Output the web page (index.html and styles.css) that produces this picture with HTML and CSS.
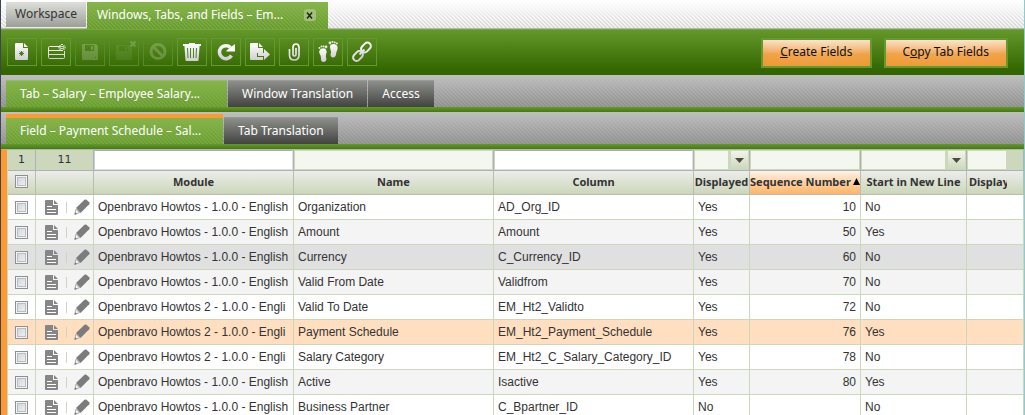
FILE: index.html
```html
<!DOCTYPE html>
<html lang="en">
<head>
<meta charset="utf-8">
<title>Windows, Tabs, and Fields</title>
<link rel="stylesheet" href="styles.css">
</head>
<body>
<svg class="defs" width="0" height="0" aria-hidden="true">
  <defs>
    <linearGradient id="silver" x1="0" y1="0" x2="0" y2="1"><stop offset="0" stop-color="#fff"/><stop offset="1" stop-color="#cfcfcf"/></linearGradient>
    <linearGradient id="silver-line" gradientUnits="userSpaceOnUse" x1="0" y1="4" x2="0" y2="24"><stop offset="0" stop-color="#fff"/><stop offset="1" stop-color="#c4c4c4"/></linearGradient>
    <symbol id="doc" viewBox="0 0 13 15"><path fill="#868686" d="M1 0h7v5h5v9a1 1 0 0 1-1 1H1a1 1 0 0 1-1-1V1a1 1 0 0 1 1-1zM9 0l4 4H9z"/><path stroke="#fff" d="M2 6.500h5M2 9.500h9M2 12.500h9"/></symbol>
    <symbol id="pencil" viewBox="0 0 16 16"><path fill="#7c7c7c" d="M2 9 10.500.800q1-.800 2 0L15.200 3.300q.800 1 0 2L6.500 14z"/><path fill="#f6f6f6" stroke="#8a8a8a" stroke-width=".7" d="M2 10.200 5.500 13.700.800 15.300z"/><path fill="#777" d="M1.300 13.200.300 15.800 3 14.900z"/></symbol>
  </defs>
</svg>
<div class="app">
  <nav class="main-tabs" aria-label="Open windows">
    <button class="main-tab">Workspace</button>
    <div class="main-tab main-tab-active"><span>Windows, Tabs, and Fields – Em...</span>
      <button class="close" aria-label="Close tab"><svg width="7" height="7" viewBox="0 0 7 7"><path d="M1 .500 6 6.500M6 .500 1 6.500" stroke="#222" stroke-width="1.500"/></svg></button>
    </div>
  </nav>

  <div class="toolbar">
    <div class="tools">
      <button class="tool" aria-label="New in form"><svg viewBox="0 0 28 26"><path fill="url(#silver)" fill-rule="evenodd" d="M8 4h7v5h5v11a1 1 0 0 1-1 1H8a1 1 0 0 1-1-1V5a1 1 0 0 1 1-1zM16 4l4 4h-4z"/><path d="M13.500 12v5M11 14.500h5M11.800 12.700l3.400 3.600M15.200 12.700l-3.400 3.600" stroke="#47801a"/></svg></button>
      <button class="tool" aria-label="New in grid"><svg viewBox="0 0 28 26"><path fill="none" stroke="url(#silver-line)" d="M18 7.500H7.500q-1 0-1 1v10q0 1 1 1h14q1 0 1-1V12M7 11.500h12M7 15.500h15"/><path stroke="#fff" stroke-width="2" stroke-dasharray="1 1" d="M16.500 8.500h7M20 5v7"/><path d="M17.500 6l5 5M22.500 6l-5 5" stroke="#fff"/><circle cx="20" cy="8.500" r="1" fill="#4d8720"/></svg></button>
      <button class="tool tool-off" disabled aria-label="Save"><svg viewBox="0 0 28 26"><path fill="#fff" fill-rule="evenodd" d="M6 6q0-1 1-1h13l2 2v13q0 1-1 1H7q-1 0-1-1zM9 6v6h9V6zM15 7h2v4h-2zM19 18h1v1h-1z"/></svg></button>
      <button class="tool tool-off" disabled aria-label="Save and close"><svg viewBox="0 0 28 26"><path fill="#fff" fill-opacity=".35" fill-rule="evenodd" d="M6 7q0-1 1-1h12l3 3v11q0 1-1 1H7q-1 0-1-1zM9 7v5h9V7zM15 8h2v3h-2z"/><path stroke="#fff" stroke-width="2" d="M20.500 2.500l5 5M25.500 2.500l-5 5"/></svg></button>
      <button class="tool tool-off" disabled aria-label="Undo"><svg viewBox="0 0 28 26"><circle cx="14" cy="12.500" r="7" fill="none" stroke="#fff" stroke-width="3"/><path d="M9.500 8l9 9" stroke="#fff" stroke-width="3"/></svg></button>
      <button class="tool" aria-label="Delete"><svg viewBox="0 0 28 26"><path fill="url(#silver)" d="M5 5h6V4h6v1h6v2h-1.500v1l-1 13q0 1-1 1h-11q-1 0-1-1L6.500 8V7H5z"/><path d="M9.500 9l.500 10M12.500 9v10M15.500 9v10M18.500 9l-.500 10" stroke="#4a831d"/></svg></button>
      <button class="tool" aria-label="Refresh"><svg viewBox="0 0 28 26"><path fill="none" stroke="url(#silver-line)" stroke-width="3.500" d="M19.500 16.500A6.500 6.500 0 1 1 18.500 8.500"/><path fill="#fff" d="M23 5v7.500h-8.500v-1z"/></svg></button>
      <button class="tool" aria-label="Export"><svg viewBox="0 0 28 26"><path fill="url(#silver)" d="M5 4h7v5h5v5h-6v4h6v3H5q-1 0-1-1V5q0-1 1-1zM13 4l4 4h-4zM12 14h6v-4l6 5.500-6 5.500v-4h-6z"/></svg></button>
      <button class="tool" aria-label="Attachments"><svg viewBox="0 0 28 26"><path fill="none" stroke="url(#silver-line)" stroke-width="1.700" d="M9.500 10v6q0 5 4.700 5t4.800-5V8.500Q19 5 16 5t-3 3.500v7q0 1.500 1.500 1.500t1.500-1.500V9"/></svg></button>
      <button class="tool" aria-label="Audit trail"><svg viewBox="0 0 28 26"><g fill="url(#silver)"><path d="M6 10.500q3.500-2.500 6 0 1.500 2.500 0 5-.500 2 .500 4.500-.500 3-3 3-2.500 0-2.500-3 .300-3-1.200-5-1.300-2.500.200-4.500z"/><path d="M16.500 6q3-2 6 0 2 2.500.500 5.500-.700 1.500-1 4-.500 3-3 3-2.700-.500-2.400-3 1-2.500 0-4.500Q15 8 16.500 6z"/><circle cx="5.500" cy="9" r="1"/><circle cx="7.500" cy="7.500" r="1"/><circle cx="9.500" cy="7.500" r="1"/><circle cx="12" cy="8" r="1.400"/><circle cx="16" cy="4" r="1.400"/><circle cx="18.500" cy="3" r="1"/><circle cx="20.700" cy="3.400" r="1"/><circle cx="22.800" cy="4.600" r="1"/></g></svg></button>
      <button class="tool" aria-label="Link"><svg viewBox="0 0 28 26"><g fill="none" stroke="url(#silver-line)" stroke-width="2"><rect x="12.500" y="5" width="11" height="7" rx="3.500" transform="rotate(-45 18 8.500)"/><rect x="4.500" y="13.500" width="11" height="7" rx="3.500" transform="rotate(-45 10 17)"/><path d="M11.500 15.500l5-5"/></g></svg></button>
    </div>
    <div class="actions">
      <button class="action"><u>C</u>reate Fields</button>
      <button class="action">C<u>o</u>py Tab Fields</button>
    </div>
  </div>

  <nav class="sub-tabs" aria-label="Tab level">
    <button class="sub-tab sub-tab-on wide">Tab – Salary – Employee Salary...</button>
    <button class="sub-tab">Window Translation</button>
    <button class="sub-tab">Access</button>
  </nav>
  <nav class="sub-tabs" aria-label="Field level">
    <button class="sub-tab sub-tab-on focused">Field – Payment Schedule – Sal...</button>
    <button class="sub-tab">Tab Translation</button>
  </nav>

  <main class="grid-pane">
    <table class="grid">
      <colgroup><col class="c-check"><col class="c-edit"><col class="c-text"><col class="c-text"><col class="c-text"><col class="c-shown"><col class="c-seq"><col class="c-line"><col></colgroup>
      <thead>
        <tr class="filters">
          <td class="count">1</td><td class="count">11</td>
          <td><input class="filter plain" type="text" aria-label="Filter module"></td>
          <td><input class="filter" type="text" aria-label="Filter name"></td>
          <td><input class="filter plain" type="text" aria-label="Filter column"></td>
          <td><div class="combo"><input class="filter" type="text" aria-label="Filter displayed"><button class="drop" aria-label="Choose displayed"><svg width="9" height="5" viewBox="0 0 9 5"><path d="M0 0h9L4.500 5z" fill="#4b4b42"/></svg></button></div></td>
          <td><input class="filter" type="text" aria-label="Filter sequence number"></td>
          <td><div class="combo"><input class="filter" type="text" aria-label="Filter start in new line"><button class="drop" aria-label="Choose start in new line"><svg width="9" height="5" viewBox="0 0 9 5"><path d="M0 0h9L4.500 5z" fill="#4b4b42"/></svg></button></div></td>
          <td><div class="last"><input class="filter" type="text" aria-label="Filter display"></div></td>
        </tr>
        <tr class="heads">
          <th><input type="checkbox" aria-label="Select all"></th><th></th>
          <th>Module</th><th>Name</th><th>Column</th><th class="tight">Displayed</th>
          <th class="sorted tight"><div class="sort">Sequence Number<svg width="7" height="7" viewBox="0 0 7 7"><path d="M0 7 3.500 0 7 7z"/></svg></div></th>
          <th>Start in New Line</th><th class="cut"><div class="last">Display</div></th>
        </tr>
      </thead>
      <tbody id="rows"></tbody>
    </table>
  </main>
</div>
<script src="rows.js"></script>
</body>
</html>
```
FILE: styles.css
```css
* { box-sizing: border-box; }
body { margin: 0; height: 100vh; overflow: hidden; font: 12px "Liberation Sans", Arial, sans-serif; color: #333; }
button, input { font: inherit; color: inherit; margin: 0; padding: 0; border: 0; border-radius: 0; }
.defs { position: absolute; }
.app { min-height: 100vh; border-left: 1px solid #3c4650; border-right: 1px solid #8ccccc; }

.main-tabs, .toolbar, .sub-tabs { font-family: "Noto Sans", sans-serif; font-size: 12px; line-height: 18px; white-space: nowrap; }
.main-tabs {
  display: flex; align-items: flex-end; gap: 1px; height: 29px; padding-left: 5px;
  background:
    linear-gradient(#fff, rgba(255,255,255,.2)),
    linear-gradient(45deg, #ccc 25%, #f0f0f0 25% 50%, #ccc 50% 75%, #f0f0f0 75%) 0 0 / 4px 4px;
  border-bottom: 1px solid #b4b9ae;
}
.main-tab { height: 26px; padding: 0 9px 2px; background: linear-gradient(#dedfda, #9c9f98); border-bottom: 1px solid #eee; color: #333; }
.main-tab-active {
  display: flex; align-items: center; justify-content: space-between; min-width: 241px; height: 27px; margin-bottom: -1px; padding: 0 12px 1px 10px; border: 0; color: #fff;
  background:
    linear-gradient(rgba(134,181,75,1), rgba(122,170,64,.4)),
    linear-gradient(45deg, #5b8a27 25%, #73a639 25% 50%, #5b8a27 50% 75%, #73a639 75%) 0 0 / 4px 4px;
}
.close { display: grid; place-items: center; width: 12px; height: 12px; border-radius: 3px; background: #a1c276; }

.toolbar {
  display: flex; justify-content: space-between; align-items: flex-start; height: 46px; padding: 8px 16px 0 6px;
  background: linear-gradient(#64982b, #336600 90%); border-top: 1px solid #75a83a;
}
.tools { display: flex; gap: 4px; }
.tool { width: 30px; height: 28px; background: none; border: 1px solid #639a30; }
.tool svg { display: block; width: 28px; height: 26px; }
.tool-off { border-color: #578b29; }
.tool-off svg { opacity: .2; }
.actions { display: flex; gap: 12px; }
.action {
  height: 30px; padding: 0 17px 2px; border: 2px solid #669a30; color: #111;
  background: radial-gradient(ellipse 100% 110% at 50% 0, rgba(255,255,255,.25), rgba(255,255,255,0)), linear-gradient(#fbdcbb, #f2a657 45%, #ef9a35 55%);
}

.sub-tabs {
  display: flex; align-items: flex-end; gap: 1px; height: 37px; padding: 0 0 5px 5px;
  background:
    linear-gradient(#639a2c, #44790f) bottom / 100% 5px no-repeat,
    linear-gradient(#bfbfbf, rgba(145,145,145,.6)),
    linear-gradient(45deg, #747474 25%, #9c9c9c 25% 50%, #747474 50% 75%, #9c9c9c 75%) 0 0 / 4px 4px;
}
.sub-tab { height: 27px; padding: 0 14px; color: #fff; background: linear-gradient(#8d8f8b, #424340); border-top: 1px solid #999; }
.sub-tab-on {
  text-align: left; width: 217px; border-color: #98bd6a;
  background:
    linear-gradient(#85b54a, rgba(122,170,64,.4)),
    linear-gradient(45deg, #5f8f2b 25%, #73a639 25% 50%, #5f8f2b 50% 75%, #73a639 75%) 0 0 / 4px 4px;
}
.wide { width: 221px; }
.focused { height: 30px; border-top: 4px solid #ff9933; }

.grid-pane { border-left: 6px solid #ff9933; border-top: 1px solid #b2b7b0; }
.grid { width: 100%; table-layout: fixed; border-collapse: separate; border-spacing: 0; border-left: 1px solid #cdd7bb; }
.c-check { width: 28px; } .c-edit { width: 58px; } .c-text { width: 200px; } .c-shown { width: 56px; } .c-seq { width: 111px; } .c-line { width: 106px; }
.grid td, .grid th { padding: 0 4px; border-right: 1px solid #cdd7bb; border-bottom: 1px solid #cdd7bb; overflow: hidden; white-space: nowrap; }
.grid .filters td { height: 21px; padding: 0; background: #cdd7bb; border-color: #adb2b4; }
.grid .filters .count { text-align: center; font-family: "DejaVu Sans", sans-serif; font-size: 11px; padding-bottom: 2px; }
.filter { display: block; width: 100%; min-width: 0; height: 20px; border: 1px solid #cbd8b9; background: #f3f7ef; }
.plain { border-color: #aaa #dcdfe4 #dcdfe4 #ccc; background: #fff; }
.combo { display: flex; gap: 1px; }
.drop { display: grid; place-items: center; flex: 0 0 19px; height: 20px; border: 1px solid #cbd8b9; background: linear-gradient(#f1f4eb, #cdd7bd); }
.last { margin-right: 16px; overflow: hidden; }
.grid .heads th { height: 24px; font-family: "Noto Sans", sans-serif; font-size: 11px; line-height: 16px; padding-bottom: 2px; background: linear-gradient(#ecedea, #ccd6ba); border-color: #b7bdb1; }
.grid .heads .tight { padding: 0 0 2px; }
.grid .heads .sorted { background: linear-gradient(#fff2e6, #ffb366); }
.sort { display: flex; align-items: center; justify-content: space-between; }
.grid .heads .cut { padding: 0 0 2px 2px; text-align: left; }

input[type="checkbox"] {
  appearance: none; display: block; width: 13px; height: 13px; margin: 0 auto; border: 1px solid #8e8f8f;
  background: linear-gradient(135deg, #cbcfd5, #f6f6f6); box-shadow: inset 0 0 0 1px #f4f4f4, inset 0 0 0 2px #b8bdc5;
}
tbody td { height: 25px; }
tbody tr { background: #fff; }
tbody tr:nth-child(even) { background: #f4f4f4; }
tbody tr.hovered { background: #e0e0e0; }
tbody tr.selected { background: #ffdfbf; }
.num { text-align: right; }
.grid .edit { padding: 0 3px 0 9px; }
.edit div { display: flex; align-items: center; justify-content: space-between; }
.edit button { display: block; background: none; }
.edit svg { display: block; }
.edit i { width: 1px; height: 11px; background: #cdd7bb; }
```
FILE: rows.js
```js
const first = "Openbravo Howtos - 1.0.0 - English";
const second = "Openbravo Howtos 2 - 1.0.0 - Engli";
const rows = [
  [first, "Organization", "AD_Org_ID", "Yes", "10", "No"],
  [first, "Amount", "Amount", "Yes", "50", "Yes"],
  [first, "Currency", "C_Currency_ID", "Yes", "60", "No", "hovered"],
  [first, "Valid From Date", "Validfrom", "Yes", "70", "No"],
  [second, "Valid To Date", "EM_Ht2_Validto", "Yes", "72", "No"],
  [second, "Payment Schedule", "EM_Ht2_Payment_Schedule", "Yes", "76", "Yes", "selected"],
  [second, "Salary Category", "EM_Ht2_C_Salary_Category_ID", "Yes", "78", "No"],
  [first, "Active", "Isactive", "Yes", "80", "Yes"],
  [first, "Business Partner", "C_Bpartner_ID", "No", "", "No"]
];
document.getElementById("rows").innerHTML = rows.map(([module, name, column, shown, seq, line, state = ""]) => `
  <tr class="${state}">
    <td><input type="checkbox" aria-label="Select ${name}"></td>
    <td class="edit"><div>
      <button aria-label="Open ${name}"><svg width="13" height="15"><use href="#doc"/></svg></button><i></i>
      <button aria-label="Edit ${name}"><svg width="16" height="16"><use href="#pencil"/></svg></button>
    </div></td>
    <td>${module}</td><td>${name}</td><td>${column}</td><td>${shown}</td>
    <td class="num">${seq}</td><td>${line}</td><td></td>
  </tr>`).join("");
```
